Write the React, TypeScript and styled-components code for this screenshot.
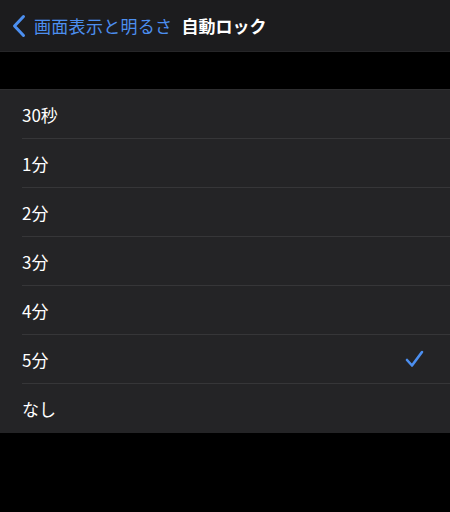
import React, { useState } from 'react'
import styled, { createGlobalStyle } from 'styled-components'

const GlobalStyle = createGlobalStyle`
  html, body {
    margin: 0;
    padding: 0;
    background: #000;
  }
  body {
    font-family: "Noto Sans CJK JP", "Liberation Sans", sans-serif;
    -webkit-font-smoothing: antialiased;
  }
`

const Page = styled.div`
  width: 450px;
  height: 512px;
  background: #000;
  display: flex;
  flex-direction: column;
  overflow: hidden;
`

const NavBar = styled.div`
  height: 52px;
  box-sizing: border-box;
  background: #1c1c1e;
  border-bottom: 1px solid #262628;
  display: flex;
  align-items: center;
  padding-left: 12px;
`

const BackButton = styled.div`
  display: flex;
  align-items: center;
  gap: 8px;
  color: #4c8ff0;
  font-size: 17px;
  letter-spacing: 0.3px;
  cursor: pointer;
`

const Title = styled.div`
  margin-left: 9px;
  color: #fff;
  font-size: 17px;
  font-weight: 700;
`

const Spacer = styled.div`
  height: 37px;
  background: #000;
`

const List = styled.div`
  background: #242426;
  border-top: 1px solid #2e2e30;
`

const Row = styled.div<{ last?: boolean }>`
  height: 49px;
  display: flex;
  align-items: center;
  margin-left: 22px;
  padding-right: 26px;
  box-sizing: border-box;
  border-bottom: ${({ last }) => (last ? 'none' : '1px solid #363638')};
  cursor: pointer;
`

const Label = styled.div`
  flex: 1;
  color: #fff;
  font-size: 17px;
`

const options = ['30秒', '1分', '2分', '3分', '4分', '5分', 'なし']

const Chevron = () => (
  <svg width="14" height="24" viewBox="0 0 14 24">
    <path d="M11.5 2.5 L2.5 12 L11.5 21.5" fill="none" stroke="#4c8ff0" strokeWidth="3" strokeLinecap="round" strokeLinejoin="round" />
  </svg>
)

const Check = () => (
  <svg width="19" height="18" viewBox="0 0 19 18">
    <path d="M2 10 L7 15.5 L17 2" fill="none" stroke="#4c8ff0" strokeWidth="2.6" strokeLinecap="round" strokeLinejoin="round" />
  </svg>
)

export default function App() {
  const [selected, setSelected] = useState('5分')

  return (
    <Page>
      <GlobalStyle />
      <NavBar>
        <BackButton>
          <Chevron />
          <span>画面表示と明るさ</span>
        </BackButton>
        <Title>自動ロック</Title>
      </NavBar>
      <Spacer />
      <List>
        {options.map((item, index) => (
          <Row key={`opt_${index}`} last={index === options.length - 1} onClick={() => setSelected(item)}>
            <Label>{item}</Label>
            {selected === item && <Check />}
          </Row>
        ))}
      </List>
    </Page>
  )
}
